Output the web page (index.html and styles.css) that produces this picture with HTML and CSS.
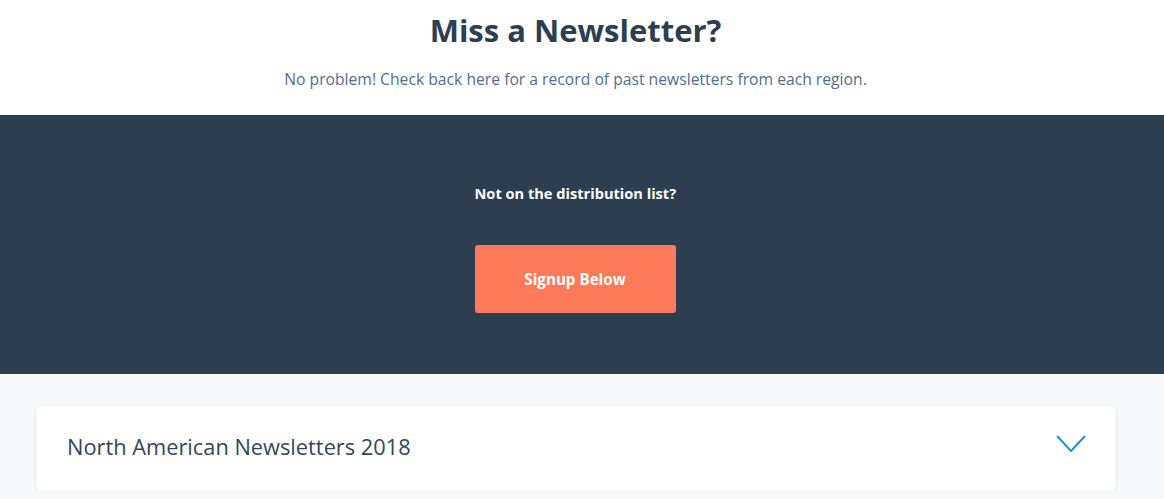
FILE: index.html
```html
<!DOCTYPE html>
<html lang="en">
<head>
    <meta charset="UTF-8">
    <meta name="viewport" content="width=device-width, initial-scale=1.0">
    <title>Miss a Newsletter?</title>
    <link rel="stylesheet" href="styles.css">
</head>
<body>
    <header class="intro">
        <h1>Miss a Newsletter?</h1>
        <p>No problem! Check back here for a record of past newsletters from each region.</p>
    </header>

    <section class="signup">
        <div class="signup-inner">
            <p class="signup-label">Not on the distribution list?</p>
            <a class="signup-btn" href="#signup">Signup Below</a>
        </div>
    </section>

    <section class="archive">
        <div class="accordion">
            <div class="accordion-head">
                <h2>North American Newsletters 2018</h2>
                <svg class="chevron" width="30" height="18" viewBox="0 0 30 18">
                    <polyline points="1,1 15,16 29,1" fill="none" stroke="#1a98c9" stroke-width="2"/>
                </svg>
            </div>
        </div>
    </section>
</body>
</html>
```

FILE: styles.css
```css
body {
    margin: 0;
    font-family: "Open Sans", Lato, sans-serif;
    color: #33475b;
    background: #f6f8fa;
}
.intro {
    background: #fff;
    text-align: center;
    height: 115px;
    padding: 8px 13px 0 0;
    box-sizing: border-box;
}
.intro h1 {
    margin: 0;
    font-size: 31px;
    line-height: 44px;
    font-weight: 700;
    color: #2d3e50;
}
.intro p {
    margin: 16px 0 0;
    font-size: 15.7px;
    line-height: 22px;
    color: #516f90;
}
.signup {
    background: #2d3e50;
    height: 259px;
    display: flex;
    justify-content: center;
    padding: 68px 13px 0 0;
    box-sizing: border-box;
}
.signup-inner {
    width: 202px;
}
.signup-label {
    margin: 0;
    color: #fff;
    font-size: 14.6px;
    font-weight: 700;
    line-height: 20px;
    white-space: nowrap;
}
.signup-btn {
    margin-top: 42px;
    width: 201px;
    height: 68px;
    display: flex;
    align-items: center;
    justify-content: center;
    background: #ff7a59;
    border-radius: 3px;
    color: #fff;
    font-size: 15.2px;
    font-weight: 700;
    text-decoration: none;
}
.archive {
    padding: 32px 48px 0 36px;
}
.accordion {
    background: #fff;
    border-radius: 4px;
    box-shadow: 0 1px 3px rgba(45, 62, 80, 0.12);
}
.accordion-head {
    height: 84px;
    display: flex;
    align-items: center;
    justify-content: space-between;
    padding: 0 30px 0 31px;
}
.accordion-head h2 {
    margin: -3px 0 0;
    font-size: 21.8px;
    font-weight: 400;
    color: #33475b;
}
.chevron {
    margin-top: -8px;
}
```
